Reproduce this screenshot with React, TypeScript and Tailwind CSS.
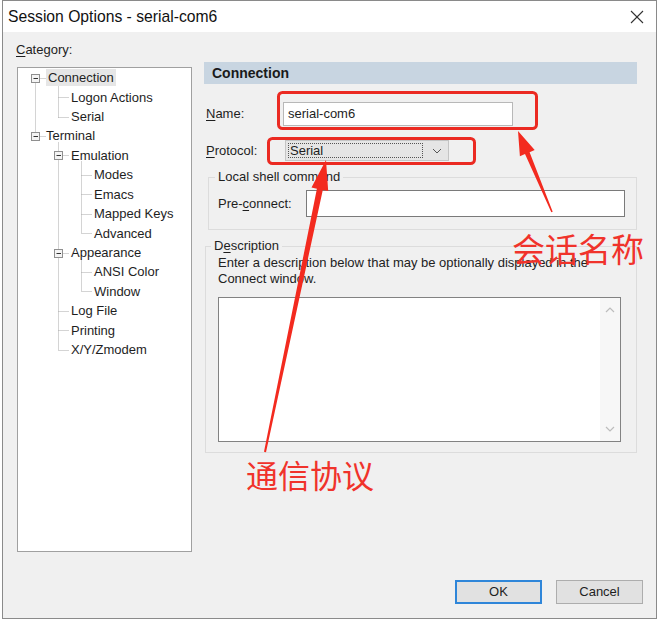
import React from "react";

type Row = { t: string; l: number; sel?: boolean };

const rows: Row[] = [
  { t: "Connection", l: 0, sel: true },
  { t: "Logon Actions", l: 1 },
  { t: "Serial", l: 1 },
  { t: "Terminal", l: 0 },
  { t: "Emulation", l: 1 },
  { t: "Modes", l: 2 },
  { t: "Emacs", l: 2 },
  { t: "Mapped Keys", l: 2 },
  { t: "Advanced", l: 2 },
  { t: "Appearance", l: 1 },
  { t: "ANSI Color", l: 2 },
  { t: "Window", l: 2 },
  { t: "Log File", l: 1 },
  { t: "Printing", l: 1 },
  { t: "X/Y/Zmodem", l: 1 },
];

const RH = 19.43;
const c = (i: number) => Math.round(9.7 + RH * i) + 0.5;

function TreeLines() {
  const dot = { stroke: "#a8a8a8", strokeWidth: 1, strokeDasharray: "1 1" };
  const lines: React.ReactNode[] = [];
  const v = (x: number, y1: number, y2: number, k: string) =>
    lines.push(<line key={k} x1={x} y1={y1} x2={x} y2={y2} {...dot} />);
  const h = (x1: number, x2: number, y: number, k: string) =>
    lines.push(<line key={k} x1={x1} y1={y} x2={x2} y2={y} {...dot} />);
  v(17.5, c(0), c(3), "v0");
  h(17.5, 28, c(0), "h0");
  h(17.5, 28, c(3), "h3");
  v(40.5, c(0) + 6, c(2), "v1a");
  [1, 2].forEach((i) => h(40.5, 51, c(i), "s" + i));
  v(40.5, c(3) + 6, c(14), "v1b");
  [4, 9, 12, 13, 14].forEach((i) => h(40.5, 51, c(i), "s" + i));
  v(63.5, c(4) + 6, c(8), "v2a");
  [5, 6, 7, 8].forEach((i) => h(63.5, 74, c(i), "s" + i));
  v(63.5, c(9) + 6, c(11), "v2b");
  [10, 11].forEach((i) => h(63.5, 74, c(i), "s" + i));
  const exp = (cx: number, cy: number, k: string) => (
    <g key={k}>
      <rect x={cx - 4} y={cy - 4} width={8} height={8} fill="#f4f4f4" stroke="#8f8f8f" strokeWidth={1} />
      <line x1={cx - 2} y1={cy} x2={cx + 2.5} y2={cy} stroke="#333" strokeWidth={1} />
    </g>
  );
  return (
    <svg className="absolute left-0 top-0 pointer-events-none" width={174} height={300}>
      {lines}
      {exp(17.5, c(0), "e0")}
      {exp(17.5, c(3), "e3")}
      {exp(40.5, c(4), "e4")}
      {exp(40.5, c(9), "e9")}
    </svg>
  );
}

function arrowPts(tx: number, ty: number, px: number, py: number, L: number, W: number, w1: number, w0: number) {
  const dx = px - tx, dy = py - ty;
  const len = Math.hypot(dx, dy);
  const ux = dx / len, uy = dy / len;
  const nx = -uy, ny = ux;
  const bx = px - ux * L, by = py - uy * L;
  const p = [
    [tx + (nx * w0) / 2, ty + (ny * w0) / 2],
    [bx + (nx * w1) / 2, by + (ny * w1) / 2],
    [bx + (nx * W) / 2, by + (ny * W) / 2],
    [px, py],
    [bx - (nx * W) / 2, by - (ny * W) / 2],
    [bx - (nx * w1) / 2, by - (ny * w1) / 2],
    [tx - (nx * w0) / 2, ty - (ny * w0) / 2],
  ];
  return p.map((q) => q.map((n) => n.toFixed(1)).join(",")).join(" ");
}

function U({ children }: { children: React.ReactNode }) {
  return <span className="underline underline-offset-2">{children}</span>;
}

export default function App() {
  return (
    <div
      className="relative w-[660px] h-[622px] bg-white overflow-hidden text-[13px] text-[#1e1e1e]"
      style={{ fontFamily: '"Liberation Sans", Arial, sans-serif' }}
    >
      <div className="ml-[2px] w-[655px] h-[619px] border border-[#8a8a8a] flex flex-col bg-[#f0f0f0]">
        {/* title bar */}
        <div className="h-[31px] bg-white flex items-center justify-between pl-[5px] pr-[12px]">
          <span className="text-[15.7px] text-[#111]">Session Options - serial-com6</span>
          <svg width="14" height="14" viewBox="0 0 14 14">
            <line x1="1" y1="1" x2="13" y2="13" stroke="#333" strokeWidth="1.1" />
            <line x1="13" y1="1" x2="1" y2="13" stroke="#333" strokeWidth="1.1" />
          </svg>
        </div>

        {/* body */}
        <div className="flex-1 flex flex-col pt-[9px] pl-[13px] pr-[13px]">
          <div className="flex items-start gap-[12px]">
            {/* left column */}
            <div className="flex flex-col">
              <div className="h-[18px] leading-[18px]">
                <U>C</U>ategory:
              </div>
              <div className="relative ml-[1px] mt-[8px] w-[175px] h-[485px] bg-white border border-[#a0a0a0]">
                <TreeLines />
                <div className="relative flex flex-col">
                  {rows.map((r) => (
                    <div
                      key={r.t}
                      className={
                        "h-[19.43px] flex items-center " +
                        (r.l === 0 ? "pl-[28px]" : r.l === 1 ? "pl-[53px]" : "pl-[76px]")
                      }
                    >
                      {r.sel ? (
                        <span className="bg-[#e6e6e6] px-[2px] leading-[17px]">{r.t}</span>
                      ) : (
                        <span className="leading-[17px]">{r.t}</span>
                      )}
                    </div>
                  ))}
                </div>
              </div>
            </div>

            {/* right column */}
            <div className="mt-[21px] w-[433px] flex flex-col">
              <div className="h-[22px] bg-[#c8d5e1] flex items-center pl-[8px] font-bold text-[14px] text-[#1a1a1a]">
                Connection
              </div>

              <div className="mt-[18px] flex items-center pl-[2px]">
                <div className="w-[77px]">
                  <U>N</U>ame:
                </div>
                <div className="w-[230px] h-[24px] bg-white border border-[#b8b8b8] flex items-center pl-[4px]">
                  serial-com6
                </div>
              </div>

              <div className="mt-[14px] flex items-center pl-[2px]">
                <div className="w-[79px]">
                  <U>P</U>rotocol:
                </div>
                <div className="w-[164px] h-[21px] bg-[#e5e5e5] border border-[#c4c4c4] flex items-stretch">
                  <div className="flex-1 m-[2px] border border-dotted border-[#555] flex items-center pl-[1px]">
                    Serial
                  </div>
                  <div className="w-[23px] flex items-center justify-center">
                    <svg width="10" height="6" viewBox="0 0 10 6">
                      <polyline points="1,1 5,5 9,1" fill="none" stroke="#555" strokeWidth="1" />
                    </svg>
                  </div>
                </div>
              </div>

              <fieldset className="mt-[8px] ml-[4px] w-[429px] border border-[#dcdcdc] pl-[9px] pr-[11px] pb-[12px]">
                <legend className="-ml-[3px] px-[3px] leading-[16px]">Local shell command</legend>
                <div className="mt-[5px] flex items-center">
                  <div className="w-[88px]">
                    Pre-<U>c</U>onnect:
                  </div>
                  <div className="flex-1 h-[27px] bg-white border border-[#7a7a7a]" />
                </div>
              </fieldset>

              <fieldset className="mt-[8px] ml-[1px] w-[432px] border border-[#dcdcdc] pl-[12px] pr-[15px] pb-[10px]">
                <legend className="-ml-[7px] px-[3px] leading-[16px]">
                  D<U>e</U>scription
                </legend>
                <div className="mt-[1px] leading-[16px] text-[#222]">
                  Enter a description below that may be optionally displayed in the
                  <br />
                  Connect window.
                </div>
                <div className="mt-[10px] h-[145px] bg-white border border-[#828282] flex justify-end">
                  <div className="w-[20px] bg-[#f7f7f7] flex flex-col items-center justify-between py-[9px]">
                    <svg width="10" height="6" viewBox="0 0 10 6">
                      <polyline points="1,5 5,1 9,5" fill="none" stroke="#bdbdbd" strokeWidth="1.2" />
                    </svg>
                    <svg width="10" height="6" viewBox="0 0 10 6">
                      <polyline points="1,1 5,5 9,1" fill="none" stroke="#bdbdbd" strokeWidth="1.2" />
                    </svg>
                  </div>
                </div>
              </fieldset>
            </div>
          </div>

          <div className="mt-[28px] flex justify-end gap-[14px]">
            <button className="w-[87px] h-[24px] bg-[#e1e1e1] border-2 border-[#2f86d9] text-[13px]">OK</button>
            <button className="w-[87px] h-[24px] bg-[#e1e1e1] border border-[#adadad] text-[13px]">Cancel</button>
          </div>
        </div>
      </div>

      {/* annotations */}
      <svg className="absolute left-0 top-0 pointer-events-none" width={660} height={622}>
        <rect x={278.5} y={92.5} width={258} height={36} rx={4} fill="none" stroke="#eb2a22" strokeWidth={3} />
        <rect x={268.5} y={138.5} width={206} height={25} rx={4} fill="none" stroke="#eb2a22" strokeWidth={3} />
        <polygon points={arrowPts(552, 212, 518, 131, 24, 16, 5, 1.5)} fill="#f32a1f" />
        <polygon points={arrowPts(265, 452, 326, 160, 30, 17, 6, 2)} fill="#f32a1f" />
      </svg>
      <div
        className="absolute left-[512px] top-[232px] text-[33px] leading-none text-[#f0332b] whitespace-nowrap"
        style={{ fontFamily: '"Noto Sans CJK SC", sans-serif' }}
      >
        会话名称
      </div>
      <div
        className="absolute left-[246px] top-[458px] text-[32px] leading-none text-[#f0332b] whitespace-nowrap"
        style={{ fontFamily: '"Noto Sans CJK SC", sans-serif' }}
      >
        通信协议
      </div>
    </div>
  );
}
